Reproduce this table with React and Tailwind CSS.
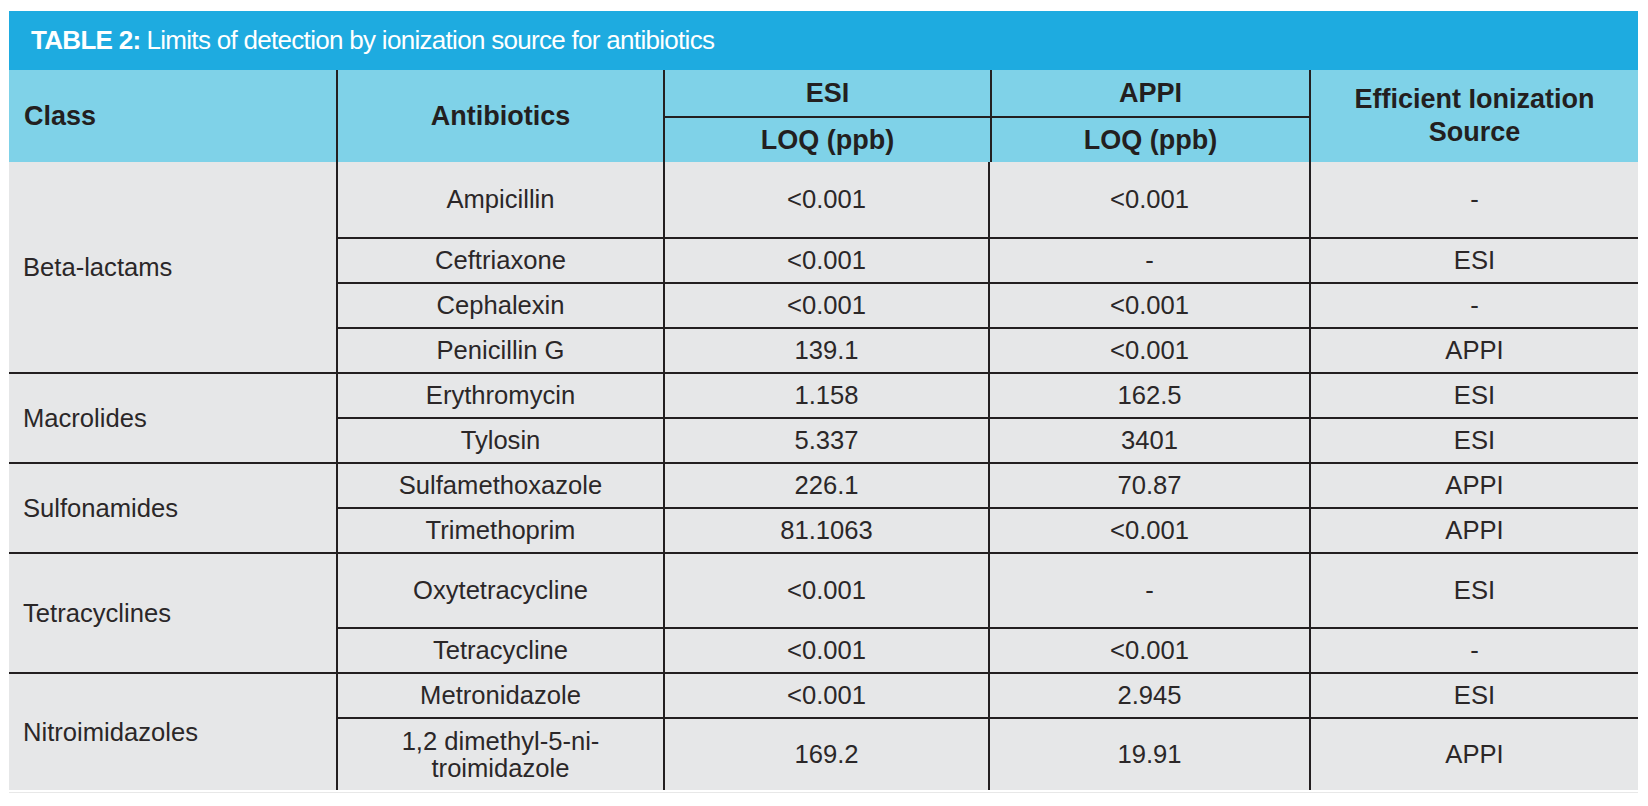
import React from "react";

//table data
const groups = [
  {
    name: "Beta-lactams",
    rows: [
      { drug: "Ampicillin", esi: "<0.001", appi: "<0.001", src: "-", tall: true },
      { drug: "Ceftriaxone", esi: "<0.001", appi: "-", src: "ESI" },
      { drug: "Cephalexin", esi: "<0.001", appi: "<0.001", src: "-" },
      { drug: "Penicillin G", esi: "139.1", appi: "<0.001", src: "APPI" },
    ],
  },
  {
    name: "Macrolides",
    rows: [
      { drug: "Erythromycin", esi: "1.158", appi: "162.5", src: "ESI" },
      { drug: "Tylosin", esi: "5.337", appi: "3401", src: "ESI" },
    ],
  },
  {
    name: "Sulfonamides",
    rows: [
      { drug: "Sulfamethoxazole", esi: "226.1", appi: "70.87", src: "APPI" },
      { drug: "Trimethoprim", esi: "81.1063", appi: "<0.001", src: "APPI" },
    ],
  },
  {
    name: "Tetracyclines",
    rows: [
      { drug: "Oxytetracycline", esi: "<0.001", appi: "-", src: "ESI", tall: true },
      { drug: "Tetracycline", esi: "<0.001", appi: "<0.001", src: "-" },
    ],
  },
  {
    name: "Nitroimidazoles",
    rows: [
      { drug: "Metronidazole", esi: "<0.001", appi: "2.945", src: "ESI" },
      {
        drug: (
          <>
            1,2 dimethyl-5-ni-
            <br />
            troimidazole
          </>
        ),
        esi: "169.2",
        appi: "19.91",
        src: "APPI",
        last: true,
      },
    ],
  },
];

//first row of a later group loses 2px to the group line above it
const rowHeight = (row, first) => {
  if (row.last) return "h-[73px]";
  if (row.tall) return first ? "h-[73px]" : "h-[75px]";
  return first ? "h-[43px]" : "h-[45px]";
};

const App = () => {
  return (
    <div className="min-h-screen bg-white pt-[11px] pl-[9px] font-['Liberation_Sans',Arial,sans-serif] text-[#231f20]">
      <div className="w-[1629px]">
        {/* title */}
        <div className="h-[59px] bg-[#1eabe0] flex items-center pl-[22px] text-white text-[26px] tracking-[-0.7px]">
          <span className="font-bold">TABLE 2:</span>
          <span className="ml-[6px]">Limits of detection by ionization source for antibiotics</span>
        </div>

        {/* header */}
        <div className="flex h-[92px] bg-[#7fd2e8] text-[27px] font-bold">
          <div className="w-[327px] flex items-center pl-[15px]">Class</div>
          <div className="w-[327px] border-l-2 border-[#231f20] flex items-center justify-center">
            Antibiotics
          </div>
          <div className="w-[646px] border-l-2 border-[#231f20] flex flex-col">
            <div className="h-[46px] flex">
              <div className="w-[325px] flex items-center justify-center">ESI</div>
              <div className="flex-1 border-l-2 border-[#231f20] flex items-center justify-center">APPI</div>
            </div>
            <div className="flex-1 flex border-t-2 border-[#231f20]">
              <div className="w-[325px] flex items-center justify-center">LOQ (ppb)</div>
              <div className="flex-1 border-l-2 border-[#231f20] flex items-center justify-center">
                LOQ (ppb)
              </div>
            </div>
          </div>
          <div className="flex-1 border-l-2 border-[#231f20] flex items-center justify-center text-center leading-[33px]">
            Efficient Ionization
            <br />
            Source
          </div>
        </div>

        {/* body */}
        <div className="bg-[#e6e7e8] text-[25.6px] text-[#2b2728]">
          {groups.map((group, gi) => (
            <div
              key={group.name}
              className={`flex ${gi > 0 ? "border-t-2 border-[#231f20]" : ""}`}
            >
              <div className="w-[327px] flex items-center pl-[14px]">{group.name}</div>
              <div className="flex-1 flex flex-col border-l-2 border-[#231f20]">
                {group.rows.map((row, ri) => (
                  <div
                    key={ri}
                    className={`flex ${rowHeight(row, gi > 0 && ri === 0)} ${
                      ri > 0 ? "border-t-2 border-[#231f20]" : ""
                    }`}
                  >
                    <div className="w-[325px] flex items-center justify-center text-center leading-[27px]">
                      {row.drug}
                    </div>
                    <div className="w-[325px] border-l-2 border-[#231f20] flex items-center justify-center">
                      {row.esi}
                    </div>
                    <div className="w-[321px] border-l-2 border-[#231f20] flex items-center justify-center">
                      {row.appi}
                    </div>
                    <div className="flex-1 border-l-2 border-[#231f20] flex items-center justify-center">
                      {row.src}
                    </div>
                  </div>
                ))}
              </div>
            </div>
          ))}
        </div>
        <div className="mt-[2px] h-px bg-[#e8e8e8]" />
      </div>
    </div>
  );
};

export default App;
